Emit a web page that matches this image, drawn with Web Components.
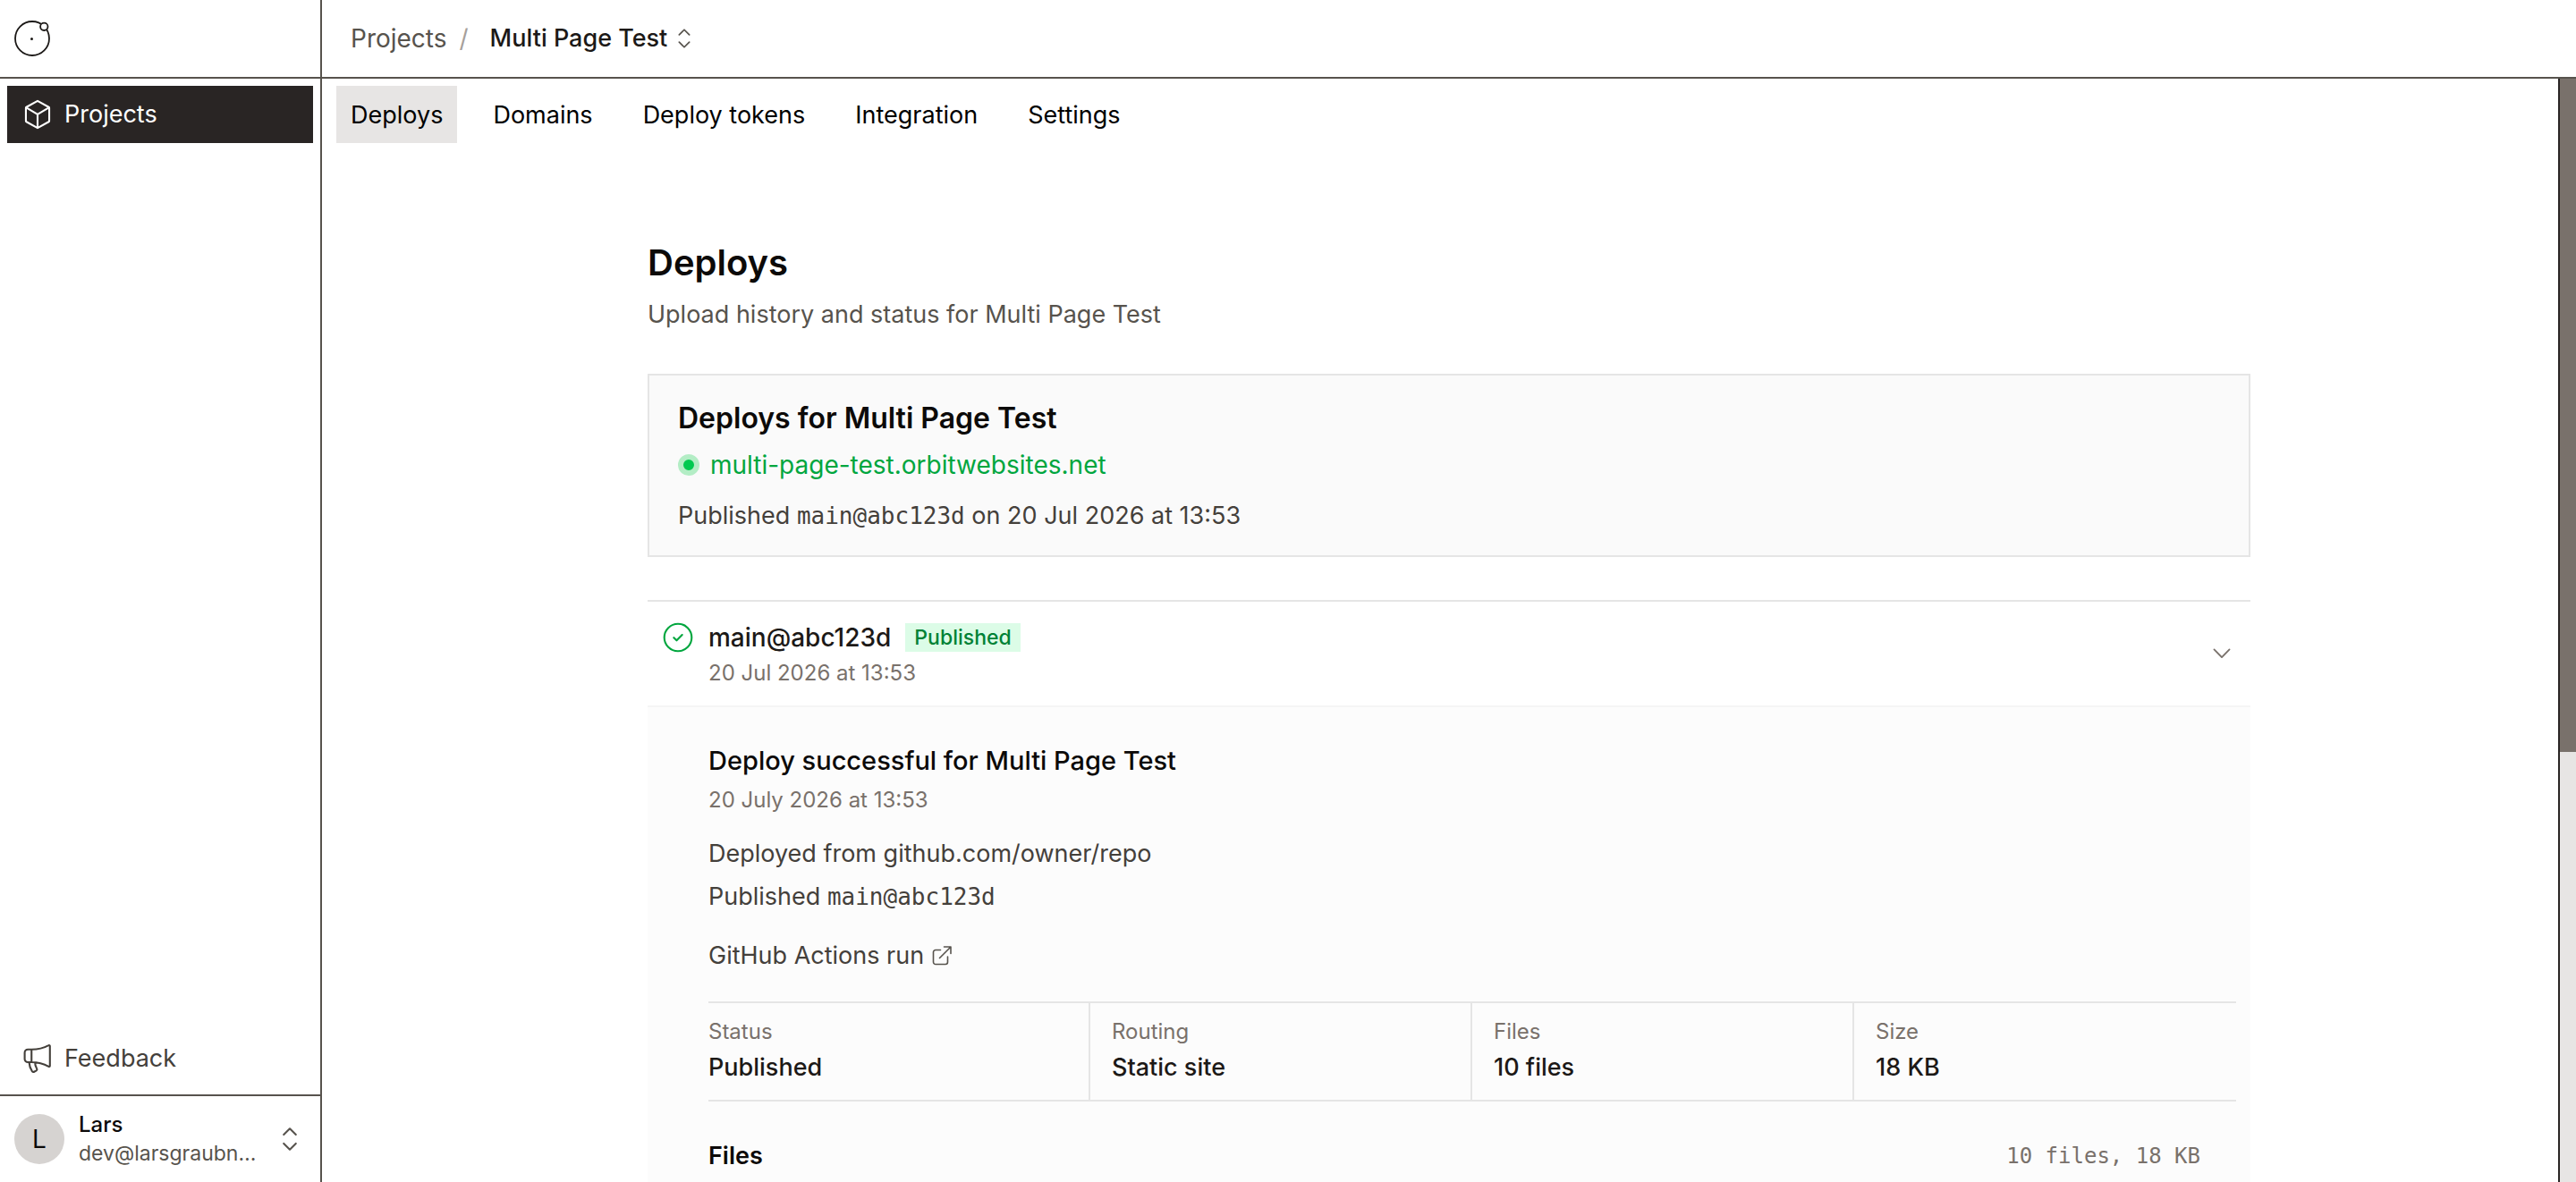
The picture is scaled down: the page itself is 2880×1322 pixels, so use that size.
<!DOCTYPE html>
<html lang="en">
<head>
  <meta charset="utf-8">
  <meta name="viewport" content="width=device-width, initial-scale=1">
  <title>Multi Page Test</title>
  <style>
    :root {
      --ink: #0c0a09;
      --ink-soft: #1c1917;
      --text: #44403b;
      --muted: #57534d;
      --faint: #79716b;
      --line-strong: #57534d;
      --line: #e5e5e5;
      --hover: #e7e5e4;
      --green: #00a63e;
      --mono: "DejaVu Sans Mono", "Liberation Mono", monospace;
    }

    body {
      margin: 0;
      background: #fff;
      color: var(--ink);
      font-family: Inter, "Liberation Sans", sans-serif;
      font-size: 27px;
      line-height: 40px;
    }
  </style>
</head>
<body>
  <app-shell>
    <orbit-logo slot="brand"></orbit-logo>
    <bread-crumbs slot="header" parent="Projects" current="Multi Page Test"></bread-crumbs>

    <nav-item slot="nav" icon="cube" active>Projects</nav-item>
    <nav-item slot="nav-bottom" icon="megaphone">Feedback</nav-item>
    <user-menu slot="user" name="Lars" email="dev@larsgraubn…"></user-menu>

    <tab-bar>
      <tab-link active>Deploys</tab-link>
      <tab-link>Domains</tab-link>
      <tab-link>Deploy tokens</tab-link>
      <tab-link>Integration</tab-link>
      <tab-link>Settings</tab-link>
    </tab-bar>

    <page-section>
      <span slot="title">Deploys</span>
      <span slot="subtitle">Upload history and status for Multi Page Test</span>

      <site-card host="multi-page-test.orbitwebsites.net">
        <span slot="title">Deploys for Multi Page Test</span>
        Published <mono-text>main@abc123d</mono-text> on 20 Jul 2026 at 13:53
      </site-card>

      <deploy-item name="main@abc123d" status="Published" date="20 Jul 2026 at 13:53">
        <deploy-details>
          <span slot="title">Deploy successful for Multi Page Test</span>
          <span slot="date">20 July 2026 at 13:53</span>
          <span slot="source">Deployed from github.com/owner/repo</span>
          <span slot="ref">Published <mono-text>main@abc123d</mono-text></span>
          <span slot="run">GitHub Actions run</span>
          <stat-cell slot="stats" label="Status">Published</stat-cell>
          <stat-cell slot="stats" label="Routing">Static site</stat-cell>
          <stat-cell slot="stats" label="Files">10 files</stat-cell>
          <stat-cell slot="stats" label="Size">18 KB</stat-cell>
          <span slot="files">Files</span>
          <span slot="files-summary">10 files, 18 KB</span>
        </deploy-details>
      </deploy-item>
    </page-section>
  </app-shell>

  <script>
    const icons = {
      cube: '<path d="M12 1.900 20.300 6.500a.8.8 0 0 1 .4.7v9.600a.8.8 0 0 1-.4.7L12 22.100l-8.300-4.600a.8.8 0 0 1-.4-.7V7.200a.8.8 0 0 1 .4-.7Z"/><path d="M3.600 6.900 12 11.900 20.400 6.900M12 11.900v9.800"/>',
      megaphone: '<path d="M7.500 5.200H4.800A2.400 2.400 0 0 0 2.400 7.600v4.700a2.400 2.400 0 0 0 2.400 2.400h2.700M7.500 5.200c4.600 0 8.600-.8 12.800-3.100a.6.6 0 0 1 .9.500v14.800a.6.6 0 0 1-.9.500c-4.200-2.300-8.200-3.200-12.800-3.200ZM5.700 14.700c.2 2.600 1 4.700 2.100 6.500.5.7 1.200.9 1.900.5l1.200-.6c.8-.5.9-1.200.4-1.900-.8-1.300-1.200-2.800-1.200-4.400"/>',
      updown: '<path d="M7.500 8.700 12 4.200l4.500 4.500M7.500 15.300l4.500 4.500 4.500-4.500"/>',
      down: '<path d="m5.600 8.600 6.400 6.500 6.400-6.500"/>',
      check: '<circle cx="12" cy="12" r="10.200"/><path d="m8.900 12.100 2.100 2.100 4.100-4.200"/>',
      external: '<path d="M10.500 5.500H5A2.500 2.500 0 0 0 2.500 8v11A2.500 2.500 0 0 0 5 21.500h11a2.500 2.500 0 0 0 2.500-2.500v-6M9.500 14.500 22 2M14.500 2H22v7.500"/>'
    };

    class BaseElement extends HTMLElement {
      constructor() {
        super();
        this.attachShadow({ mode: "open" });
      }

      connectedCallback() {
        const template = document.createElement("template");
        template.innerHTML = this.render();
        this.shadowRoot.replaceChildren(template.content.cloneNode(true));
      }

      attr(name) {
        return this.getAttribute(name) || "";
      }
    }

    class AppIcon extends BaseElement {
      render() {
        return `
          <style>
            :host { display: inline-block; flex: none; width: 32px; height: 32px; }
            svg {
              display: block;
              width: 100%;
              height: 100%;
              fill: none;
              stroke: currentColor;
              stroke-width: var(--icon-stroke, 1.4);
              stroke-linecap: round;
              stroke-linejoin: round;
            }
          </style>
          <svg viewBox="0 0 24 24" aria-hidden="true">${icons[this.attr("name")]}</svg>
        `;
      }
    }

    class OrbitLogo extends BaseElement {
      render() {
        return `
          <style>
            :host { display: block; }
            a { display: block; color: var(--ink-soft); }
            svg { display: block; width: 40px; height: 40px; }
          </style>
          <a href="#" aria-label="Home">
            <svg viewBox="0 0 40 40" fill="none" stroke="currentColor" stroke-width="1.8">
              <circle cx="20" cy="20" r="19"/>
              <circle cx="33.3" cy="6.8" r="4.2" fill="#fff"/>
              <circle cx="19.5" cy="20.5" r="1.5" fill="currentColor" stroke="none"/>
            </svg>
          </a>
        `;
      }
    }

    class AppShell extends BaseElement {
      render() {
        return `
          <style>
            :host {
              display: grid;
              grid-template-columns: 360px minmax(0, 1fr);
              grid-template-rows: 88px minmax(0, 1fr);
              height: 100vh;
            }
            .brand, header {
              display: flex;
              align-items: center;
              box-sizing: border-box;
              border-bottom: 2px solid var(--line-strong);
            }
            .brand { padding: 0 16px; border-right: 2px solid var(--line-strong); }
            header { padding: 0 32px; }
            aside {
              display: flex;
              flex-direction: column;
              justify-content: space-between;
              border-right: 2px solid var(--line-strong);
            }
            nav { padding: 8px; }
            .user { border-top: 2px solid var(--line-strong); }
            .view { position: relative; min-height: 0; }
            main { height: 100%; overflow: auto; scrollbar-width: none; }
            .rail {
              position: absolute;
              inset: 0 0 0 auto;
              width: 18px;
              border-left: 2px solid #292524;
              background: #e7e5e4;
            }
            .thumb { height: 61%; background: #79716b; }
          </style>
          <div class="brand"><slot name="brand"></slot></div>
          <header><slot name="header"></slot></header>
          <aside>
            <nav aria-label="Main"><slot name="nav"></slot></nav>
            <div>
              <nav aria-label="Help"><slot name="nav-bottom"></slot></nav>
              <div class="user"><slot name="user"></slot></div>
            </div>
          </aside>
          <div class="view">
            <main><slot></slot></main>
            <div class="rail" aria-hidden="true"><div class="thumb"></div></div>
          </div>
        `;
      }
    }

    class BreadCrumbs extends BaseElement {
      render() {
        return `
          <style>
            :host { display: flex; align-items: center; }
            a { color: var(--muted); font-size: 28px; text-decoration: none; }
            .sep { margin: 0 24px 0 14px; color: #a6a09b; font-size: 28px; }
            button {
              display: flex;
              align-items: center;
              gap: 4px;
              padding: 0;
              border: 0;
              background: none;
              color: var(--ink-soft);
              font: inherit;
              font-weight: 500;
            }
            app-icon { width: 30px; height: 30px; color: var(--muted); }
          </style>
          <a href="#">${this.attr("parent")}</a>
          <span class="sep">/</span>
          <button type="button">${this.attr("current")}<app-icon name="updown"></app-icon></button>
        `;
      }
    }

    class NavItem extends BaseElement {
      render() {
        return `
          <style>
            :host { display: block; }
            a {
              display: flex;
              align-items: center;
              gap: 12px;
              padding: 12px 16px;
              color: var(--text);
              text-decoration: none;
            }
            :host([active]) a { background: #292524; color: #fff; }
            app-icon { width: 36px; height: 36px; }
          </style>
          <a href="#"><app-icon name="${this.attr("icon")}"></app-icon><slot></slot></a>
        `;
      }
    }

    class UserMenu extends BaseElement {
      render() {
        return `
          <style>
            :host { display: block; }
            button {
              display: flex;
              align-items: center;
              gap: 16px;
              width: 100%;
              height: 96px;
              padding: 0 16px;
              border: 0;
              background: none;
              font: inherit;
              line-height: 32px;
              text-align: left;
              color: var(--muted);
            }
            .avatar {
              flex: none;
              width: 56px;
              border-radius: 50%;
              background: #d6d3d1;
              color: var(--ink);
              font-size: 28px;
              line-height: 56px;
              text-align: center;
            }
            .who { flex: 1; min-width: 0; }
            .who span { display: block; white-space: nowrap; }
            .name { color: var(--ink); font-size: 24px; font-weight: 500; }
            .email { font-size: 23px; }
            app-icon { width: 36px; height: 36px; }
          </style>
          <button type="button">
            <span class="avatar">${this.attr("name").charAt(0)}</span>
            <span class="who">
              <span class="name">${this.attr("name")}</span>
              <span class="email">${this.attr("email")}</span>
            </span>
            <app-icon name="updown"></app-icon>
          </button>
        `;
      }
    }

    class TabBar extends BaseElement {
      render() {
        return `
          <style>
            :host { display: block; }
            nav { display: flex; gap: 24px; padding: 8px 16px; }
          </style>
          <nav aria-label="Project"><slot></slot></nav>
        `;
      }
    }

    class TabLink extends BaseElement {
      render() {
        return `
          <style>
            :host { display: block; }
            a { display: block; padding: 13px 16px 11px; color: #000; text-decoration: none; }
            :host([active]) a { background: var(--hover); }
          </style>
          <a href="#"><slot></slot></a>
        `;
      }
    }

    class PageSection extends BaseElement {
      render() {
        return `
          <style>
            :host { display: block; max-width: 1792px; margin: 0 auto; padding: 96px 32px; }
            h1 { margin: 0; font-size: 40px; font-weight: 600; line-height: 60px; }
            p { margin: 8px 0 46px; color: var(--muted); }
          </style>
          <h1><slot name="title"></slot></h1>
          <p><slot name="subtitle"></slot></p>
          <slot></slot>
        `;
      }
    }

    class MonoText extends BaseElement {
      render() {
        return `
          <style>
            :host { display: inline; }
            code { font-family: var(--mono); font-size: 26px; line-height: 1; }
          </style>
          <code><slot></slot></code>
        `;
      }
    }

    class SiteCard extends BaseElement {
      render() {
        return `
          <style>
            :host {
              display: block;
              padding: 28px 32px 24px;
              border: 2px solid var(--line);
              background: #fafafa;
            }
            h2 { margin: 0; font-size: 32px; font-weight: 600; line-height: 40px; }
            a {
              display: flex;
              align-items: center;
              gap: 12px;
              width: fit-content;
              margin: 12px 0 17px;
              color: var(--green);
              font-size: 28px;
              text-decoration: none;
            }
            .dot {
              box-sizing: border-box;
              width: 24px;
              height: 24px;
              border: 6px solid #b3edc5;
              border-radius: 50%;
              background: #00c950;
            }
            p { margin: 0; color: var(--text); }
          </style>
          <h2><slot name="title"></slot></h2>
          <a href="#"><span class="dot"></span>${this.attr("host")}</a>
          <p><slot></slot></p>
        `;
      }
    }

    class DeployItem extends BaseElement {
      render() {
        return `
          <style>
            :host { display: block; margin-top: 48px; border-top: 2px solid var(--line); }
            button {
              display: flex;
              align-items: center;
              width: 100%;
              padding: 20px 16px;
              border: 0;
              background: none;
              color: var(--ink-soft);
              font: inherit;
              text-align: left;
            }
            .state { align-self: flex-start; width: 36px; height: 36px; margin: 2px 16px 0 0; color: var(--green); }
            .info { flex: 1; }
            .head { display: flex; align-items: center; gap: 16px; font-size: 28px; font-weight: 500; }
            .badge {
              padding: 0 10px;
              background: #dcfce7;
              color: #008236;
              font-size: 23px;
              line-height: 32px;
            }
            .date { display: block; margin-top: 4px; color: var(--faint); font-size: 24px; line-height: 32px; }
            .toggle { color: var(--faint); }
          </style>
          <button type="button" aria-expanded="true">
            <app-icon class="state" name="check"></app-icon>
            <span class="info">
              <span class="head">${this.attr("name")}<span class="badge">${this.attr("status")}</span></span>
              <span class="date">${this.attr("date")}</span>
            </span>
            <app-icon class="toggle" name="down"></app-icon>
          </button>
          <slot></slot>
        `;
      }
    }

    class DeployDetails extends BaseElement {
      render() {
        return `
          <style>
            :host {
              display: block;
              padding: 40px 16px 40px 68px;
              border-top: 2px solid #f5f5f5;
              background: #fcfcfc;
              color: var(--text);
            }
            h3, h4, p { margin: 0; }
            h3 { color: var(--ink); font-size: 29px; font-weight: 500; line-height: 40px; }
            .date { margin: 8px 0 20px; color: var(--faint); font-size: 24px; line-height: 32px; }
            .line { line-height: 48px; }
            a {
              display: flex;
              align-items: center;
              gap: 8px;
              width: fit-content;
              margin: 22px 0 31px;
              color: inherit;
              text-decoration: none;
            }
            a app-icon { width: 24px; height: 24px; color: var(--muted); --icon-stroke: 1.6; }
            .stats {
              display: grid;
              grid-template-columns: repeat(4, 1fr);
              border: solid var(--line);
              border-width: 2px 0;
            }
            .files {
              display: flex;
              align-items: center;
              justify-content: space-between;
              padding: 41px 40px 0 0;
            }
            h4 { color: var(--ink); font-size: 27px; font-weight: 600; }
            .summary { color: var(--faint); font-family: var(--mono); font-size: 24px; }
          </style>
          <h3><slot name="title"></slot></h3>
          <p class="date"><slot name="date"></slot></p>
          <p class="line"><slot name="source"></slot></p>
          <p class="line"><slot name="ref"></slot></p>
          <a href="#"><slot name="run"></slot><app-icon name="external"></app-icon></a>
          <div class="stats"><slot name="stats"></slot></div>
          <div class="files">
            <h4><slot name="files"></slot></h4>
            <span class="summary"><slot name="files-summary"></slot></span>
          </div>
        `;
      }
    }

    class StatCell extends BaseElement {
      render() {
        return `
          <style>
            :host { display: block; padding: 16px 24px; border-right: 2px solid var(--line); }
            :host(:first-of-type) { padding-left: 0; }
            :host(:last-of-type) { border-right: 0; }
            dl, dd { margin: 0; }
            dt { color: var(--faint); font-size: 24px; line-height: 32px; }
            dd { margin-top: 4px; color: var(--ink-soft); font-weight: 500; }
          </style>
          <dl>
            <dt>${this.attr("label")}</dt>
            <dd><slot></slot></dd>
          </dl>
        `;
      }
    }

    customElements.define("app-icon", AppIcon);
    customElements.define("orbit-logo", OrbitLogo);
    customElements.define("app-shell", AppShell);
    customElements.define("bread-crumbs", BreadCrumbs);
    customElements.define("nav-item", NavItem);
    customElements.define("user-menu", UserMenu);
    customElements.define("tab-bar", TabBar);
    customElements.define("tab-link", TabLink);
    customElements.define("page-section", PageSection);
    customElements.define("mono-text", MonoText);
    customElements.define("site-card", SiteCard);
    customElements.define("deploy-item", DeployItem);
    customElements.define("deploy-details", DeployDetails);
    customElements.define("stat-cell", StatCell);
  </script>
</body>
</html>
